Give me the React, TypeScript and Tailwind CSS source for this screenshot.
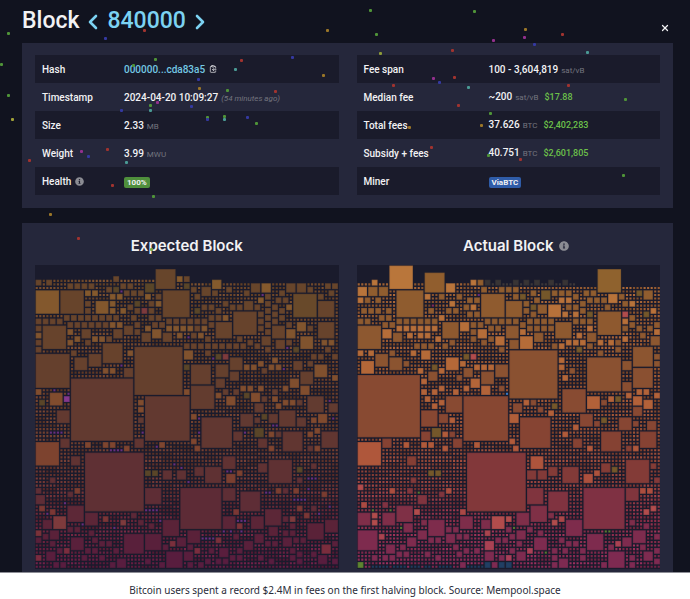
import type { ReactNode } from "react";
import { FaInfoCircle } from "react-icons/fa";
import { ClipboardCopy, X } from "lucide-react";

type RGB = [number, number, number];
type Stop = [number, RGB];
type Sheet = { ox: number; oy: number; tiles: string };
type Theme = { base: Stop[]; bright: Stop[]; small: Stop[]; flags: Record<string, string> };

const CELLS = 86;
const PITCH = 10.56;

// Each sheet covers a quarter of a block. A tile is "x,y,size+tone"; x and y snap to
// the cell grid, the size is in cells (2 when it is left out).
const expectedSheets: Sheet[] = [
  {
    ox: 16,
    oy: 120,
    tiles: `378,132,6 250,153 441,153,b 462,153 18,163 50,163 114,174 135,174 156,174 177,174 229,185 250,185,o
272,174 293,174 346,174,3o 462,174,o 18,195,7b 92,195,7 166,195,b 187,195,b 240,206,b 261,206,b 282,195 303,195
325,195 346,206,b 378,206 399,195,8 166,227 198,227,4b 240,227,b 166,248 240,248,b 272,248,b 293,238 314,227,o
335,248,r 314,248 356,227 378,227,b 356,248 103,269 124,269 145,269 166,269 187,269 208,269 229,269 250,269
303,269 356,269 378,269 18,280 39,280 61,280 82,280 114,290 135,290 156,290 177,290 198,290 219,290 240,290,b
261,290,b 282,301,3 314,290 346,301,b 367,290 388,290 314,311 409,280 430,280 451,280 472,280 409,301,b 430,301,b
451,301,b 472,301,b 18,301 18,322,b 39,301,7 18,343 18,364 114,311,b 156,311,3 135,333,b 114,343,b 166,343
187,333,b 208,333,b 229,333 250,311,3 335,322,3 367,311,3b 399,322,3 441,322,b 462,354 18,386,10 124,375 135,396,4
177,386,4 219,354,6 293,375,b 314,364,14 462,375,3b 219,428,b 240,428,b 282,428,3 124,460,18 346,513,13 18,492,b
61,502,4b 103,513,p 29,524,o 325,524,b 462,417,o 462,492,b 272,195,1v 272,418,1v 72,492,1v 114,502,1v 472,333,1v`,
  },
  {
    ox: -434,
    oy: 120,
    tiles: `96,163,3b 65,185,3 33,185 96,195 43,206 138,185 191,195 212,174,3 244,174,3b 318,174,3 350,174,3 435,174
456,174 381,185 297,195 234,216,b 255,206 413,206 445,195 339,206,7k 413,227,5 286,216 308,216 191,227,3 128,227
43,248,o 65,238 86,238 107,248 149,238 170,238 223,238 255,227 276,238 297,248 318,238,b 160,259,7 234,259
255,248 276,259 86,269 107,269 128,269,b 234,280 255,269 255,290 276,280 297,269 65,280 43,280 43,301 65,301,b
86,290 107,290,5 276,301,4 318,290 318,311,3b 350,290,3b 381,301 413,290,5 234,301 255,311 54,322,b 33,322 12,322
75,333 170,333 202,343 244,333,3 160,354 181,354 223,354 286,343,3 318,343 360,333,4b 424,343,b 445,343,b 435,364
339,364,o 255,364 12,354 33,354 54,354 75,354 96,354 117,354 138,354 12,375,3b 75,375 107,386,o 128,386,r
149,396,4 33,417,6 107,417,4 33,481,7 107,460,3 149,438,3 191,417,b 212,417,b 234,407,b 244,428 265,417,b
276,396,b 286,417,b 339,407,3 392,386 413,386 456,386 381,407 403,417,4b 360,438,4 456,449,b 329,460,3b 360,481,3b
181,481,b 202,481,b 234,481,b 128,492 160,492 191,502,o 212,502,3b 107,502,b 138,513,3b 244,513 276,513,b 276,492
308,481,b 381,513,5 12,417,o 12,492,b 245,206,1v 382,196,1v 318,365,1v 308,428,1v 97,396,1v 445,523,1v`,
  },
  {
    ox: 16,
    oy: -405,
    tiles: `82,30,4 325,20,b 325,51 92,115,3 18,126,7b 166,126,b 219,126,b 240,126,b 282,136,b 314,115,3 388,126,b
124,168,3 166,157,17 346,210,o 367,210,o 399,210,3 441,210,3 61,231 18,263 18,284,3 114,273 135,263,b 346,263,5
451,263,12 29,315,b 61,326,b 114,315,5 39,357,3 71,347,4r 166,336,4 219,347,b 272,357,r 303,336 325,357 356,368
399,357,5 18,389,r 39,400 61,389,3 114,378 135,378 177,389 18,410 124,410,4 187,410 61,421 208,421 229,421
282,400,6 346,400,5 399,431 420,421,r 441,410,3 472,389,4 82,442 103,442,r 166,442 187,442 250,442 18,463,r
50,452,3 156,463 208,463 71,484 92,484 240,484 261,473,3 346,473 388,484 409,452,5 462,452,3 61,94,1v 72,94,1v
82,94,1v 93,94,1v 240,147,1v 251,147,1v 261,147,1v 272,147,1v 346,326,1v 356,326,1v 367,326,1v 378,326,1v
103,305,1v 50,336,1v 156,368,1v 251,378,1v 388,357,1v 335,94,1v 378,136,1v 431,189,1v 451,200,1v 472,242,1v`,
  },
  {
    ox: -434,
    oy: -405,
    tiles: `223,9,3 244,41,o 286,9,b 308,-1,b 329,-1,b 350,-1 445,9,3 33,41,b 65,51,9 181,41,4 223,51 265,41,3 297,30,5
350,51,3 392,51,b 413,41,3b 160,94,3 223,83,3o 265,94,b 286,94 308,94,6 381,94,b 403,83,b 424,94,5 33,115,b
43,136,b 234,115,3 265,136,b 381,136 403,136,b 128,168,4 43,200,3 75,200,5 234,189,3 170,210,b 138,221,3b
265,178,7 350,200,o 392,189 350,231 128,263,4 181,273,6 286,263,b 308,263 339,263,b 424,273,b 160,326,b 128,347,4
170,368,r 212,347,4 255,326,5 350,315,b 392,315 371,336,b 308,347 329,347,r 265,378,3 329,368 308,389 329,389
381,368,5 435,357,4 22,389,4 1,410 22,431 43,442,r 107,410,r 160,400 191,421,3 223,400,3 255,421 276,421
308,410,3 339,410 360,410 424,431,3r 456,421 12,452,3 86,442 117,442,3 75,473 54,484 22,484 107,473 128,473
149,463 170,463 170,442 234,463 265,473 329,442 329,463 350,452 350,473 392,452 413,463,3 456,473 138,210,1v
149,210,1v 255,273,1v 265,273,1v 276,73,1v 287,73,1v 340,294,1v 350,294,1v 361,294,1v 371,294,1v 382,231,1v
392,231,1v 403,231,1v 382,263,1v 413,336,1v 445,315,1v 170,357,1v 181,357,1v 191,357,1v 65,410,1v 75,410,1v
86,410,1v 97,410,1v 128,389,1v 149,389,1v 181,389,1v 54,51,1v 54,94,1v 191,94,1v 456,51,1v`,
  },
];

const actualSheets: Sheet[] = [
  {
    ox: 23,
    oy: 120,
    tiles: `120,121,7b 67,163,b 226,142,6 290,174,3b 363,163,b 384,163 405,163,d 437,163,d 24,185,3b 56,185,3 88,185,3
24,216,b 46,216 78,216 141,195,8 226,206,b 268,206 321,206 395,185 448,185 469,185 300,227,b 353,216 374,216
342,238 363,238,b 395,206,7 469,227,5 36,248 57,248 78,248 110,248 237,248 268,269,b 290,248 311,248 353,259
374,259 88,269 110,269 24,280 46,280 78,280 141,280 162,280 184,280 205,280 226,280 247,280 405,280 427,280
448,280 469,280 99,290 120,290 141,301,b 162,301,b 184,301,b 205,301,b 226,301,b 247,301,b 279,290,5 332,290,3b
363,290 384,290 363,311 384,311,3b 416,301 437,301 469,301,4 24,301,7 99,311,3b 131,322,3 173,322,b 205,322,b
226,322,b 258,333,b 300,343 363,333 395,343 416,333 437,333,3b 448,364 194,354 215,354 237,354 279,354 24,375,b
57,375,b 78,386,4 120,375 120,396,4 36,407,4b 162,407 184,375,b 215,375,3b 205,428,b 290,396,4b 342,386,o
363,386,r 332,407,b 247,417,o 268,428,b 237,438,3 342,428,3 374,417,b 395,417,b 416,417,b 437,417,4 395,438,4
363,460,3b 342,481,b 395,481,3b 321,449 24,450,18 215,460,b 215,492,b 247,492,b 268,481,b 226,513,b 311,492,b
290,513,5 342,513,13 448,481 469,502,1w 384,206,1v 247,238,1m 448,301,1m`,
  },
  {
    ox: -442,
    oy: 120,
    tiles: `25,163,d 57,163,d 88,163,d 131,163,d 173,163,d 278,132,7k 4,185 25,185 46,206,o 25,206 78,195 88,216
110,195,3o 141,195 162,195 183,195 162,216,b 183,216,b 205,206 237,195 258,195 247,216 268,216 310,206,3b 342,206
289,216 300,238 395,195,o 416,195,3 353,227 374,227,b 353,259,r 353,280,b 57,227 57,248 78,238,o 78,259 99,238,3
131,238,4b 173,259,b 205,238 205,259,b 226,227 183,238 226,248 247,259,o 278,259,7 247,280 247,301,b 226,280
205,280 183,269 374,269 416,259,o 437,248,b 4,280 25,280 46,290 67,280 88,280 110,280 131,280 46,311,b 67,301
88,301 110,301 131,301 151,290,5 374,290 395,301 374,311,3 405,322 427,301 448,290 448,311,b 353,301 353,333,b
46,333,4b 88,322,3 14,343,3 247,322,3 215,322,b 437,333,3 141,354 162,354,b 183,343,b 205,343,b 226,343,b
215,364,o 247,354 278,343,b 310,343,b 332,343 332,364 278,375 14,375,14 162,396,b 162,417,b 194,428 173,449,b
247,396,10 384,364,6 384,428,6 353,407,3 448,386 448,407 353,470,3 173,492,7 395,492,b 416,492,b 448,502,b
363,502,b 247,513,4b 289,524 310,513,b 332,513,o 384,513,3b 416,524,3b 57,524,b 78,524 237,259,1m 437,206,1m`,
  },
  {
    ox: 23,
    oy: -405,
    tiles: `215,30,5 268,41,3 300,51,b 215,94,3 247,83,3o 279,94,b 300,94 247,9,b 268,-1,b 99,115,3 162,126,b 215,126,b
237,126,b 311,115,3 279,136,b 374,126,b 24,126,7b 173,168,3 353,157,17 237,210,o 258,210,o 184,231 24,252,r
120,263,b 173,263 205,284,3 268,273 290,263,b 36,305,b 99,305 141,315,5 194,326,r 332,326,b 24,336,4 67,336,r
67,357,r 99,336,4 162,368,3 215,357 237,357,5 290,378 311,378 332,347,4 395,357,3 427,347,4r 24,389,6 88,400,r
110,431,3 173,410,3 205,389,3 152,431 237,410 258,410 290,400,3 321,400 342,400 405,389,r 405,421,3r 437,410
458,410 311,431 342,442 374,442 405,452,3 67,463 99,463 120,463 141,452 162,452 226,452 258,463 321,452 448,463
469,463,r 24,484,g 332,484 405,484,u 427,484 448,484,u 469,484,u 67,326,1g 120,326,1g 205,273,1g 152,378,1g
67,495,1u 78,495,1u 88,495,1u 99,495,1u 110,495,1u 131,495,1u 141,495,1u 152,495,1u 162,495,1u 184,495,1u
194,495,1u 205,495,1u 226,495,1u 237,495,1u 268,495,1u 279,495,1u 290,495,1u 300,495,1u 353,495,1u 363,495,1u
374,495,1u 384,495,1u 395,495,1u`,
  },
  {
    ox: -442,
    oy: -405,
    tiles: `25,9,3 141,9,o 99,20 131,30,b 14,41,3b 46,51,9 226,41,4 268,62 289,51,o 205,73,b 342,51,4 384,20,3 384,62
427,62,3 173,94,b 14,115,b 25,136,b 205,115,3 247,136,b 289,94,6 405,94,5 363,136 384,136,b 78,168,4b 67,210,3
99,210,3 131,200,3 173,200,5 237,221,3b 289,189,3 268,210,b 321,200,o 363,178,7 437,189 448,231 67,263,5
131,273,6 237,263,12 363,263,4 405,263,b 427,263,b 78,315,5 131,336 162,347,b 141,357,r 36,336,4 4,347,r 67,378
183,357,5 416,326,r 437,315,r 374,357 416,368 4,378 14,400 36,389,3 36,421 99,389 88,410,4 162,410 183,421
205,421 247,400,5 310,431 332,421,r 353,410,3 384,389,4 405,431 448,400 14,442 67,442,r 36,452,3 141,442 141,463
141,484 162,473,3 226,442 226,463 4,463,r 4,484,u 310,452,5 374,463 374,484 289,484 416,452,3 448,442 448,473
173,442 25,378,1g 300,389,1g 310,389,1g 120,452,1g`,
  },
];

const expectedTheme: Theme = {
  base: [[0, [103, 70, 43]], [25, [103, 66, 44]], [40, [98, 59, 48]], [55, [96, 51, 50]], [68, [94, 44, 54]], [75, [90, 34, 56]], [86, [88, 28, 64]]],
  bright: [[0, [134, 92, 44]], [20, [128, 84, 46]], [45, [128, 73, 46]], [65, [122, 60, 48]], [86, [122, 40, 66]]],
  small: [[0, [112, 74, 42]], [30, [112, 66, 42]], [50, [110, 62, 46]], [62, [108, 52, 50]], [72, [110, 38, 58]], [86, [108, 30, 72]]],
  flags: { r: "#7d3a3c", o: "#594528", k: "#68492a", p: "#84388c", v: "#713088" },
};

const actualTheme: Theme = {
  base: [[0, [146, 96, 46]], [25, [140, 86, 48]], [40, [136, 74, 50]], [55, [132, 62, 52]], [66, [128, 52, 62]], [74, [126, 44, 76]], [86, [126, 42, 82]]],
  bright: [[0, [186, 120, 60]], [25, [180, 106, 56]], [50, [176, 90, 58]], [65, [170, 76, 62]], [86, [168, 60, 92]]],
  small: [[0, [158, 98, 52]], [30, [154, 86, 48]], [50, [148, 76, 52]], [62, [148, 64, 60]], [72, [146, 48, 76]], [86, [148, 44, 92]]],
  flags: { r: "#b14c4c", o: "#74572a", k: "#8f622e", v: "#713088", d: "#383435", g: "#5e8530", u: "#213f63", w: "#3d86d8", m: "#902c60" },
};

function tone(stops: Stop[], row: number, gain = 1): string {
  let i = 0;
  while (i < stops.length - 2 && row > stops[i + 1][0]) i++;
  const [r0, a] = stops[i];
  const [r1, b] = stops[i + 1];
  const t = Math.min(1, Math.max(0, (row - r0) / (r1 - r0)));
  return `rgb(${a.map((v, k) => Math.round((v + (b[k] - v) * t) * gain)).join(",")})`;
}

function noise(a: number, b: number): number {
  const s = Math.sin(a * 127.1 + b * 311.7) * 43758.5453;
  return s - Math.floor(s);
}

type BlockMapProps = {
  label: string;
  sheets: Sheet[];
  theme: Theme;
  skyline: (col: number) => number;
  ghosts?: [number, number];
};

function BlockMap({ label, sheets, theme, skyline, ghosts }: BlockMapProps) {
  const used = new Set<number>();
  const tiles: { c: number; r: number; n: number; fill: string }[] = [];
  for (const sheet of sheets) {
    for (const item of sheet.tiles.split(/\s+/)) {
      const [x, y, spec = ""] = item.split(",");
      const match = /^(\d*)([a-z]?)$/.exec(spec);
      const n = match && match[1] ? Number(match[1]) : 2;
      const flag = match ? match[2] : "";
      const c = Math.min(CELLS - n, Math.max(0, Math.round((Number(x) - 1 - sheet.ox) / PITCH)));
      const r = Math.min(CELLS - n, Math.max(0, Math.round((Number(y) - 1 - sheet.oy) / PITCH)));
      let free = true;
      for (let i = 0; i < n * n; i++) {
        if (used.has((r + Math.floor(i / n)) * CELLS + c + (i % n))) free = false;
      }
      if (!free) continue;
      for (let i = 0; i < n * n; i++) used.add((r + Math.floor(i / n)) * CELLS + c + (i % n));
      const mid = r + n / 2;
      const bright = flag === "b" || (flag === "r" && mid > 73);
      const fill = bright ? tone(theme.bright, mid) : flag ? theme.flags[flag] : tone(theme.base, mid);
      tiles.push({ c, r, n, fill });
    }
  }
  const strips: { d: string; fill: string }[] = [];
  if (ghosts) {
    let d = "";
    for (let c = ghosts[0]; c < ghosts[1]; c++) {
      if (!used.has(5 * CELLS + c)) d += `M${c + 0.2} 5.2h.6v.6h-.6z`;
    }
    strips.push({ d, fill: "#3c3738" });
  }
  for (let r = 0; r < CELLS; r++) {
    const d = ["", "", ""];
    for (let c = 0; c < CELLS; c++) {
      if (r < skyline(c) || used.has(r * CELLS + c)) continue;
      const k = Math.floor(noise(Math.floor(c / 3), r) * 3);
      d[k] += `M${c + 0.2} ${r + 0.2}h.6v.6h-.6z`;
    }
    const dim = 0.86 + noise(r, 7) * 0.16;
    d.forEach((path, k) => path && strips.push({ d: path, fill: tone(theme.small, r, dim * (0.86 + k * 0.12)) }));
  }
  return (
    <svg viewBox="0 0 86 86" role="img" aria-label={label} className="block w-full bg-[#1a1b2c]">
      {strips.map((s, i) => (
        <path key={i} d={s.d} fill={s.fill} />
      ))}
      {tiles.map((t, i) => {
        const pad = t.n === 1 ? 0.2 : 0.17;
        return (
          <g key={i} fill={t.fill}>
            <rect x={t.c + pad} y={t.r + pad} width={t.n - pad * 2} height={t.n - pad * 2} opacity={0.85} />
            <rect x={t.c + pad + 0.2} y={t.r + pad + 0.2} width={t.n - pad * 2 - 0.4} height={t.n - pad * 2 - 0.4} />
          </g>
        );
      })}
    </svg>
  );
}

const G = "#4f9438";
const B = "#3439a0";
const R = "#a0332f";
const T = "#4a9a94";
const Y = "#9a7628";
const P = "#93308e";

const confetti: [number, number, string][] = [
  [8, 33, G], [1, 64, G], [8, 95, G], [12, 119, "#a0a038"], [105, 38, B], [144, 30, R], [155, 59, G], [133, 65, G],
  [241, 60, R], [292, 57, B], [235, 69, T], [323, 75, Y], [327, 30, Y], [198, 79, B], [199, 88, Y], [227, 90, G],
  [275, 91, R], [157, 102, P], [150, 105, G], [150, 110, T], [191, 106, B], [121, 110, B], [207, 117, G],
  [207, 119, B], [224, 116, G], [224, 119, T], [247, 117, B], [256, 123, G], [81, 151, P], [88, 156, B], [107, 149, R],
  [126, 162, T], [29, 160, R], [112, 185, R], [153, 196, G], [50, 214, Y], [78, 238, R], [151, 249, "#7aa844"],
  [370, 10, G], [474, 11, G], [376, 34, G], [380, 53, "#8d9a38"], [493, 40, P], [525, 29, Y], [524, 37, P],
  [534, 44, B], [562, 34, R], [587, 52, T], [452, 50, R], [433, 78, P], [439, 82, B], [454, 77, R], [393, 85, R],
  [468, 87, T], [568, 85, R], [458, 105, R], [625, 99, G], [490, 113, G], [409, 127, Y], [481, 125, Y],
  [431, 147, R], [488, 155, G], [520, 159, R], [623, 175, G],
];

function Confetti() {
  return (
    <svg width="690" height="260" aria-hidden="true" className="pointer-events-none absolute top-0 left-0">
      {confetti.map(([x, y, fill], i) => (
        <rect key={i} x={x - 1} y={y - 1} width="3" height="3" rx="1" fill={fill} />
      ))}
    </svg>
  );
}

function Chevron({ d }: { d: string }) {
  return (
    <svg width="10" height="16" viewBox="0 0 10 16" fill="none" stroke="currentColor" strokeWidth="2.6" strokeLinecap="round" strokeLinejoin="round">
      <path d={d} />
    </svg>
  );
}

function Row({ label, wide, children }: { label: ReactNode; wide?: boolean; children: ReactNode }) {
  return (
    <tr className="h-7 odd:bg-[#1a1b2b]">
      <th scope="row" className={`${wide ? "w-[132px]" : "w-[89px]"} pl-[7px] text-left font-medium`}>
        {label}
      </th>
      <td className="whitespace-nowrap">{children}</td>
    </tr>
  );
}

function Unit({ children }: { children: ReactNode }) {
  return <span className="ml-[3px] text-[8px] font-normal text-[#74757f]">{children}</span>;
}

function Fiat({ children }: { children: ReactNode }) {
  return <span className="ml-[6px] text-[9px] text-[#6cc04a]">{children}</span>;
}

export default function App() {
  return (
    <figure className="min-h-screen bg-white">
      <div className="relative overflow-hidden border-b border-[#8d8e96] bg-[#11131f] pr-[17px] pl-[22px] font-['Roboto','Liberation_Sans',sans-serif] text-[10px] font-medium text-[#f2f2f4]">
        <header className="flex h-[43px] items-center">
          <h1 className="flex items-center gap-[9px] text-[23px] font-medium">
            Block
            <a href="#839999" aria-label="Previous block" className="text-[#7cd2f2]">
              <Chevron d="M8 2 2 8l6 6" />
            </a>
            <a href="#840000" className="text-[#7cd2f2]">
              840000
            </a>
            <a href="#840001" aria-label="Next block" className="text-[#7cd2f2]">
              <Chevron d="m2 2 6 6-6 6" />
            </a>
          </h1>
          <button type="button" aria-label="Close" className="mt-3 mr-[3px] ml-auto">
            <X size={10} strokeWidth={3} />
          </button>
        </header>

        <section className="grid grid-cols-2 gap-[18px] bg-[#25273b] px-[13px] pt-3 pb-[13px]">
          <table className="w-full table-fixed border-collapse">
            <tbody>
              <Row label="Hash">
                <span className="flex items-center gap-1">
                  <a href="#hash" className="text-[#74c8e4]">
                    000000...cda83a5
                  </a>
                  <button type="button" aria-label="Copy hash">
                    <ClipboardCopy size={8} />
                  </button>
                </span>
              </Row>
              <Row label="Timestamp">
                2024-04-20 10:09:27
                <i className="ml-[3px] text-[8px] font-normal text-[#74757f]">(54 minutes ago)</i>
              </Row>
              <Row label="Size">
                2.33<Unit>MB</Unit>
              </Row>
              <Row label="Weight">
                3.99<Unit>MWU</Unit>
              </Row>
              <Row
                label={
                  <span className="flex items-center gap-1">
                    Health <FaInfoCircle size={9} className="text-[#8b8c93]" />
                  </span>
                }
              >
                <span className="inline-block rounded-xs bg-[#4f8f3c] px-[3px] text-[8px] leading-[11px] font-bold">100%</span>
              </Row>
            </tbody>
          </table>
          <table className="w-full table-fixed border-collapse">
            <tbody>
              <Row wide label="Fee span">
                100 - 3,604,819<Unit>sat/vB</Unit>
              </Row>
              <Row wide label="Median fee">
                ~200<Unit>sat/vB</Unit>
                <Fiat>$17.88</Fiat>
              </Row>
              <Row wide label="Total fees">
                37.626<Unit>BTC</Unit>
                <Fiat>$2,402,283</Fiat>
              </Row>
              <Row wide label="Subsidy + fees">
                40.751<Unit>BTC</Unit>
                <Fiat>$2,601,805</Fiat>
              </Row>
              <Row wide label="Miner">
                <span className="inline-block rounded-xs bg-[#2f5ca8] px-[3px] text-[8px] leading-[11px] font-bold">ViaBTC</span>
              </Row>
            </tbody>
          </table>
        </section>

        <section className="mt-[15px] grid grid-cols-2 gap-[18px] bg-[#25273b] px-[13px] pb-[3px]">
          <div>
            <h2 className="flex h-[42px] items-center justify-center pt-1 font-['Inter',sans-serif] text-[15px] font-semibold">
              Expected Block
            </h2>
            <BlockMap label="Expected block" sheets={expectedSheets} theme={expectedTheme} skyline={(c) => (c < 42 ? 4 : 5)} />
          </div>
          <div>
            <h2 className="flex h-[42px] items-center justify-center gap-[6px] pt-1 pl-4 font-['Inter',sans-serif] text-[15px] font-semibold">
              Actual Block <FaInfoCircle size={10} className="text-[#8b8c93]" />
            </h2>
            <BlockMap
              label="Actual block"
              sheets={actualSheets}
              theme={actualTheme}
              skyline={(c) => (c < 36 ? 5 : 6)}
              ghosts={[36, 62]}
            />
          </div>
        </section>
        <Confetti />
      </div>
      <figcaption className="pt-2 text-center font-['Noto_Sans',sans-serif] text-[10px] leading-[18px] text-[#2a2c3a]">
        Bitcoin users spent a record $2.4M in fees on the first halving block. Source: Mempool.space
      </figcaption>
    </figure>
  );
}
